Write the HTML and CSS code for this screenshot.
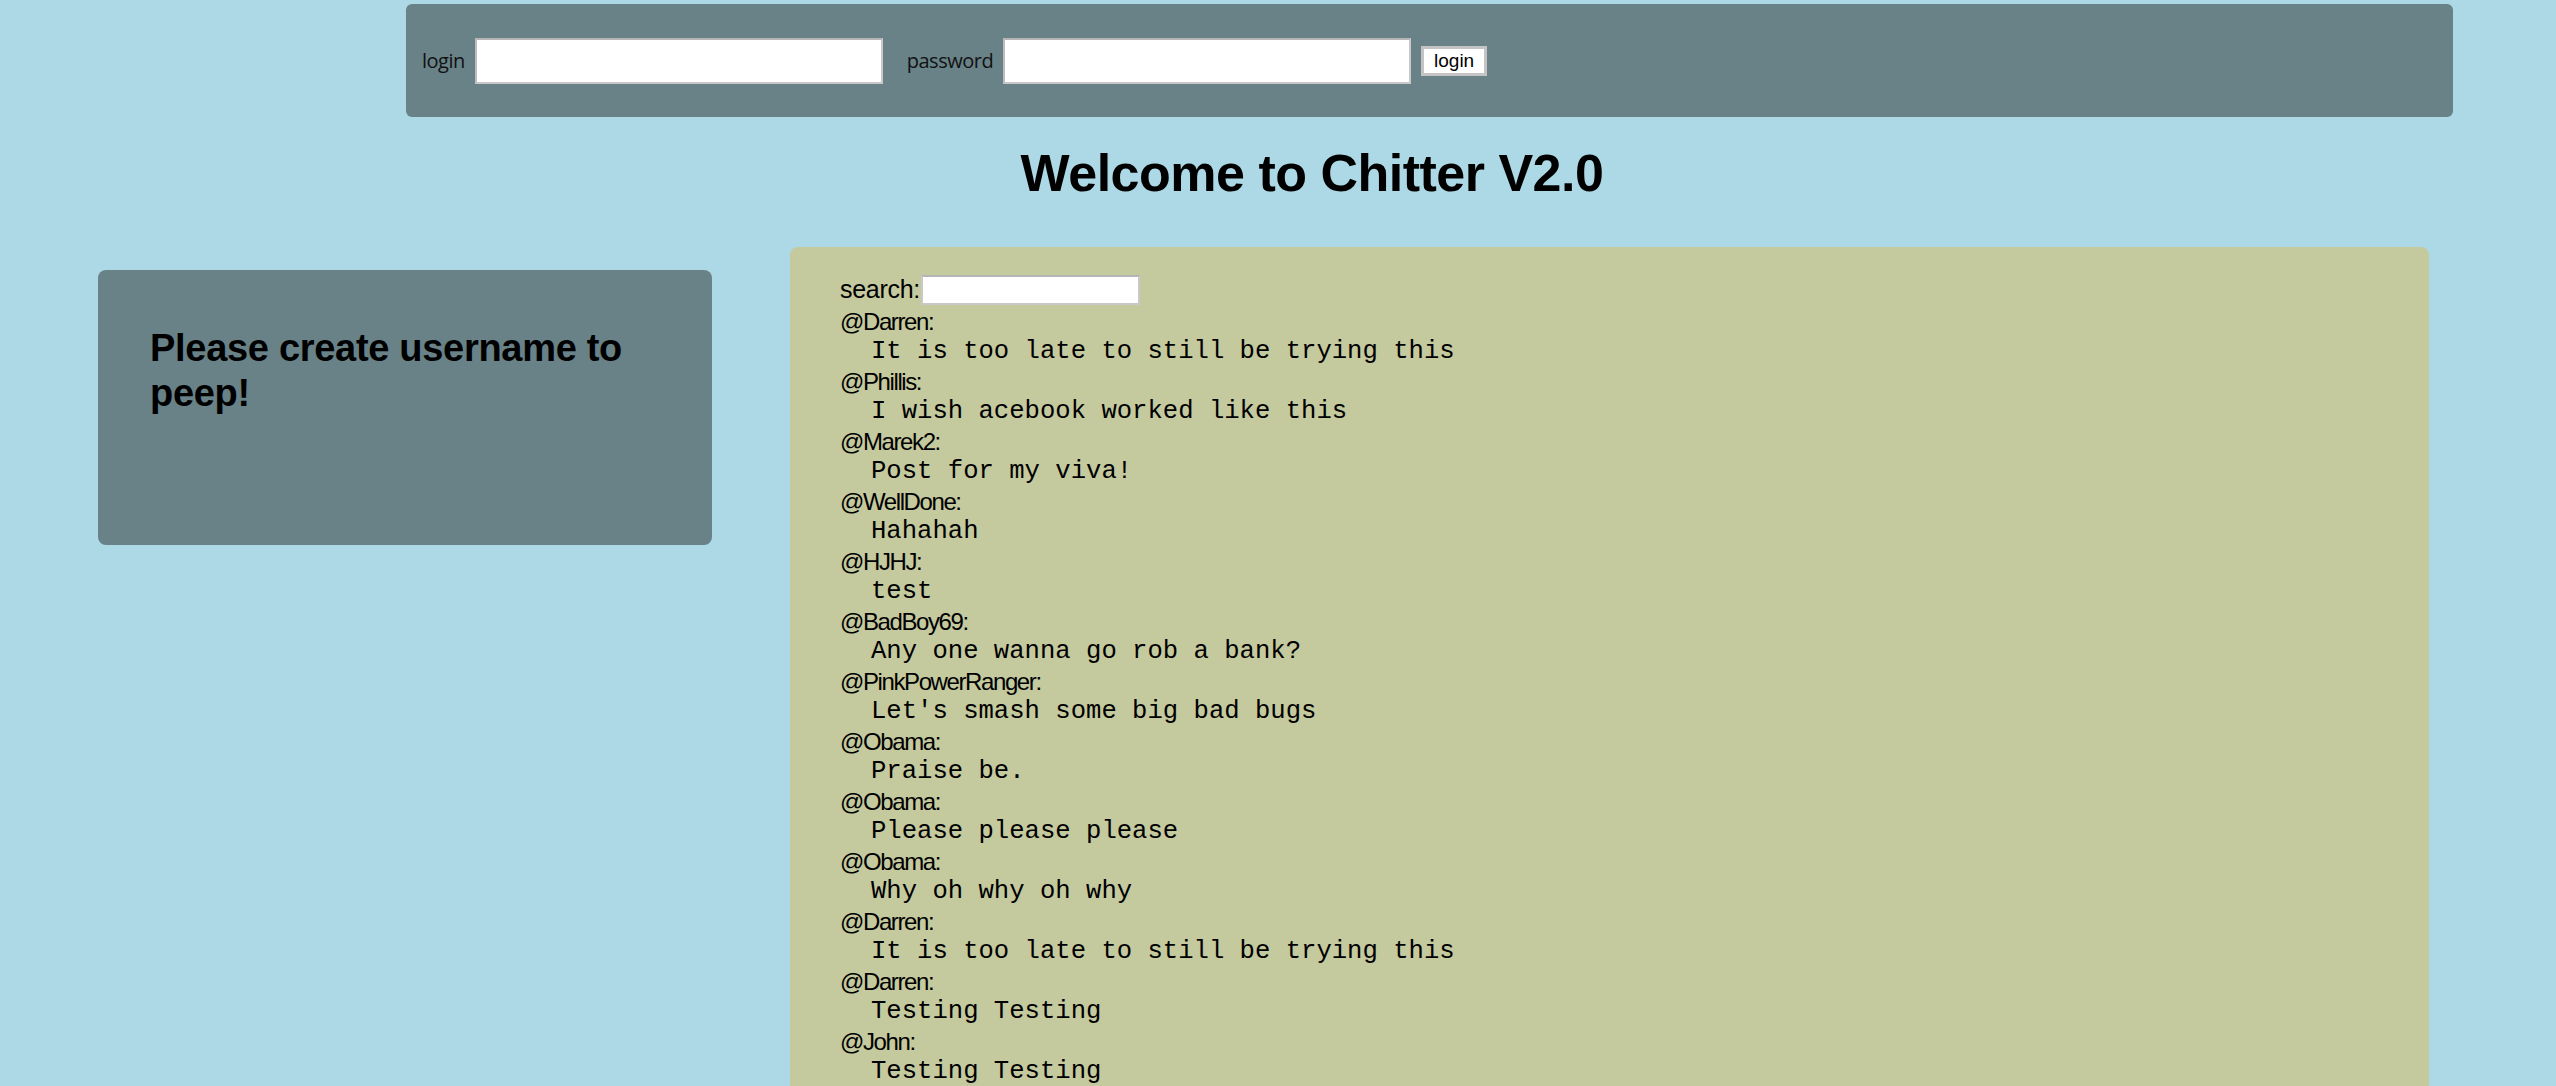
FILE: index.html
```html
<!DOCTYPE html>
<html>
<head>
<meta charset="utf-8">
<title>Chitter</title>
<link rel="stylesheet" href="styles.css">
</head>
<body>
<form class="topbar">
  <label class="top-label" for="login">login</label>
  <input class="top-input" id="login" type="text">
  <label class="top-label pw-label" for="password">password</label>
  <input class="top-input" id="password" type="password">
  <button class="login-btn" type="button">login</button>
</form>
<h1 class="title">Welcome to Chitter V2.0</h1>
<div class="main">
  <div class="side-panel">
    <h3 class="side-msg">Please create username to peep!</h3>
  </div>
  <div class="feed">
    <div class="search-row">
      <span class="search-label">search:</span><input class="search-input" type="text">
    </div>
    <div class="post"><div class="post-name">@Darren:</div><div class="post-msg">It is too late to still be trying this</div></div>
    <div class="post"><div class="post-name">@Phillis:</div><div class="post-msg">I wish acebook worked like this</div></div>
    <div class="post"><div class="post-name">@Marek2:</div><div class="post-msg">Post for my viva!</div></div>
    <div class="post"><div class="post-name">@WellDone:</div><div class="post-msg">Hahahah</div></div>
    <div class="post"><div class="post-name">@HJHJ:</div><div class="post-msg">test</div></div>
    <div class="post"><div class="post-name">@BadBoy69:</div><div class="post-msg">Any one wanna go rob a bank?</div></div>
    <div class="post"><div class="post-name">@PinkPowerRanger:</div><div class="post-msg">Let's smash some big bad bugs</div></div>
    <div class="post"><div class="post-name">@Obama:</div><div class="post-msg">Praise be.</div></div>
    <div class="post"><div class="post-name">@Obama:</div><div class="post-msg">Please please please</div></div>
    <div class="post"><div class="post-name">@Obama:</div><div class="post-msg">Why oh why oh why</div></div>
    <div class="post"><div class="post-name">@Darren:</div><div class="post-msg">It is too late to still be trying this</div></div>
    <div class="post"><div class="post-name">@Darren:</div><div class="post-msg">Testing Testing</div></div>
    <div class="post"><div class="post-name">@John:</div><div class="post-msg">Testing Testing</div></div>
  </div>
</div>
</body>
</html>
```

FILE: styles.css
```css
html, body {
  margin: 0;
  padding: 0;
  background: #add8e6;
  color: #000;
  font-family: "Liberation Sans", Arial, sans-serif;
}

.topbar {
  box-sizing: border-box;
  margin: 4px 0 0 406px;
  width: 2047px;
  height: 113px;
  background: #688288;
  border-radius: 6px;
  display: flex;
  align-items: center;
  padding-left: 16px;
}

.top-label {
  font-family: "Open Sans", sans-serif;
  font-size: 20px;
  letter-spacing: -0.5px;
  color: #111;
  margin-right: 10px;
}

.pw-label {
  margin-left: 24px;
}

.top-input {
  box-sizing: border-box;
  width: 408px;
  height: 46px;
  margin: 0;
  padding: 0 4px;
  background: #fff;
  border: 2px solid #c9c9c9;
  border-top-color: #b5b5b5;
  border-left-color: #bdbdbd;
  border-radius: 0;
  outline: none;
}

.login-btn {
  box-sizing: border-box;
  width: 66px;
  height: 30px;
  margin: 0 0 0 10px;
  padding: 0;
  background: #fff;
  border: 3px solid #c4c4c4;
  border-radius: 0;
  font-family: "Liberation Sans", Arial, sans-serif;
  font-size: 19px;
  color: #000;
}

.title {
  box-sizing: border-box;
  margin: 26px 0 0 0;
  padding-left: 68px;
  text-align: center;
  font-size: 52px;
  line-height: 60px;
  letter-spacing: -0.5px;
  font-weight: bold;
}

.main {
  display: flex;
  align-items: flex-start;
  margin-top: 44px;
}

.side-panel {
  box-sizing: border-box;
  margin: 23px 0 0 98px;
  width: 614px;
  height: 275px;
  background: #688288;
  border-radius: 8px;
  padding: 56px 52px 0 52px;
}

.side-msg {
  margin: 0;
  font-size: 38px;
  line-height: 45px;
  letter-spacing: -0.3px;
  font-weight: bold;
}

.feed {
  box-sizing: border-box;
  margin-left: 78px;
  width: 1639px;
  background: #c4c99e;
  border-radius: 8px;
  padding: 30px 0 40px 50px;
}

.search-row {
  display: flex;
  align-items: flex-start;
  height: 30px;
}

.search-label {
  font-size: 25px;
  line-height: 24px;
  letter-spacing: -0.3px;
}

.search-input {
  box-sizing: border-box;
  width: 219px;
  height: 30px;
  margin: -2px 0 0 1px;
  padding: 0 4px;
  background: #fff;
  border: 2px solid #c9c9c9;
  border-top-color: #b5b5b5;
  border-radius: 0;
  outline: none;
}

.post-name {
  font-size: 24px;
  letter-spacing: -1.4px;
  line-height: 30px;
}

.post-msg {
  font-family: "Liberation Mono", "Courier New", monospace;
  font-size: 25.6px;
  line-height: 30px;
  padding-left: 31px;
}
```
